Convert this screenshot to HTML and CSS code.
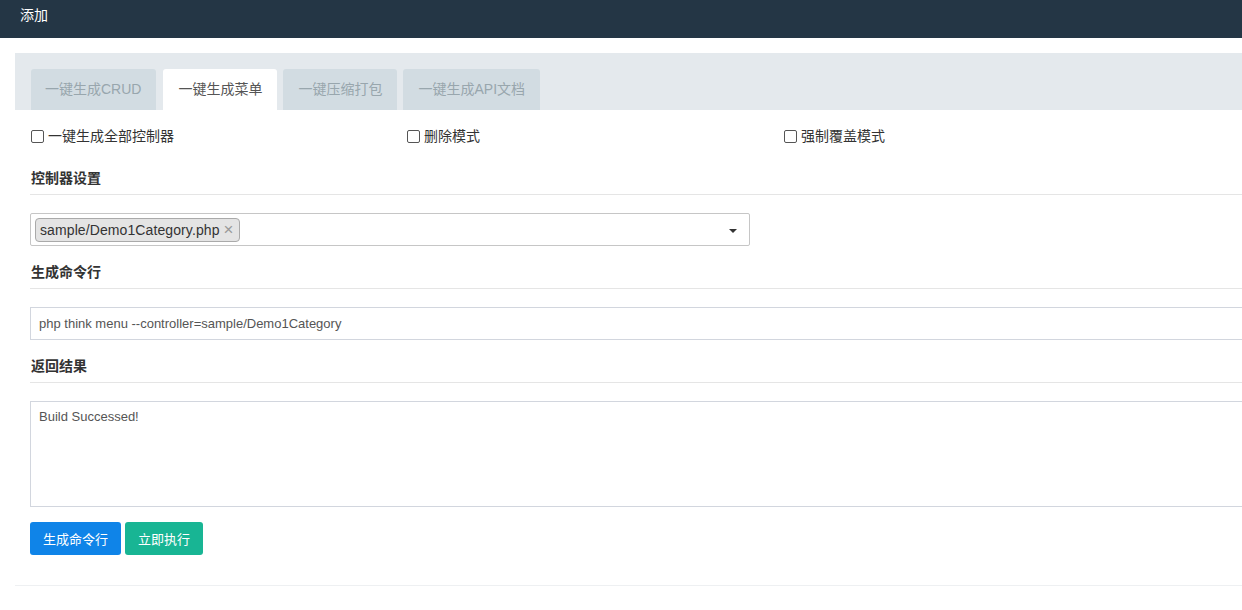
FILE: index.html
```html
<!DOCTYPE html>
<html>
<head>
<meta charset="utf-8">
<link rel="stylesheet" href="styles.css">
</head>
<body>
<div class="topbar">添加</div>
<div class="main">
  <div class="panel">
    <div class="panel-heading">
      <ul class="tabs">
        <li class="tab">一键生成CRUD</li>
        <li class="tab active">一键生成菜单</li>
        <li class="tab">一键压缩打包</li>
        <li class="tab">一键生成API文档</li>
      </ul>
    </div>
    <div class="panel-body">
      <div class="check-row">
        <label class="check"><span class="box"></span>一键生成全部控制器</label>
        <label class="check"><span class="box"></span>删除模式</label>
        <label class="check"><span class="box"></span>强制覆盖模式</label>
      </div>
      <div class="legend first">控制器设置</div>
      <div class="select">
        <span class="tag">sample/Demo1Category.php<span class="x">×</span></span>
        <span class="caret"></span>
      </div>
      <div class="legend">生成命令行</div>
      <div class="input">php think menu --controller=sample/Demo1Category</div>
      <div class="legend">返回结果</div>
      <div class="textarea">Build Successed!</div>
      <div class="buttons">
        <button class="btn btn-blue">生成命令行</button>
        <button class="btn btn-green">立即执行</button>
      </div>
    </div>
  </div>
</div>
</body>
</html>
```
FILE: styles.css
```css
html, body {
  margin: 0;
  padding: 0;
  overflow: hidden;
  background: #fff;
  font-family: "Liberation Sans", "Noto Sans CJK SC", sans-serif;
  font-size: 13px;
  color: #333;
}
.topbar {
  height: 38px;
  box-sizing: border-box;
  background: #243645;
  color: #fff;
  font-size: 14px;
  line-height: 16px;
  padding: 7px 0 0 20px;
}
.main {
  padding: 15px 0 0 15px;
}
.panel {
  width: 1300px;
  border-bottom: 1px solid #eef0f2;
}
.panel-heading {
  background: #e4e9ed;
  padding: 16px 16px 0 16px;
}
.tabs {
  list-style: none;
  margin: 0;
  padding: 0;
  display: flex;
  gap: 6px;
}
.tab {
  height: 41px;
  box-sizing: border-box;
  padding: 0 15px;
  line-height: 41px;
  font-size: 14px;
  color: #98a6ad;
  background: #d2dce2;
  border-radius: 3px 3px 0 0;
}
.tab:first-child { padding: 0 15px 0 14px; margin-right: 1px; }
.tab.active {
  background: #fff;
  color: #555;
}
.panel-body {
  padding: 16px 15px 30px 15px;
}
.check-row {
  display: grid;
  grid-template-columns: 376px 377px 1fr;
  height: 20px;
  line-height: 20px;
  font-size: 14px;
  color: #333;
}
.check {
  display: flex;
  align-items: center;
  padding-left: 1px;
}
.box {
  width: 11px;
  height: 11px;
  border: 1px solid #555;
  border-radius: 2px;
  margin-right: 4px;
  background: #fff;
}
.legend {
  font-size: 14px;
  font-weight: bold;
  color: #333;
  line-height: 20px;
  padding: 0 0 6px 1px;
  border-bottom: 1px solid #e5e5e5;
  margin: 16px 0 18px 0;
}
.legend.first { margin-top: 22px; }
.select {
  width: 720px;
  height: 33px;
  box-sizing: border-box;
  border: 1px solid #c6c6c6;
  border-radius: 2px;
  display: flex;
  align-items: center;
  padding: 0 4px;
  position: relative;
}
.tag {
  height: 24px;
  box-sizing: border-box;
  background: #e4e4e4;
  border: 1px solid #aaa;
  border-radius: 4px;
  font-size: 14px;
  line-height: 22px;
  padding: 0 5px 0 4px;
  color: #333;
  letter-spacing: 0.1px;
}
.tag .x {
  color: #999;
  font-size: 17px;
  margin-left: 4px;
}
.caret {
  position: absolute;
  right: 12px;
  top: 15px;
  width: 0;
  height: 0;
  border-left: 4px solid transparent;
  border-right: 4px solid transparent;
  border-top: 4px solid #333;
}
.input {
  height: 33px;
  box-sizing: border-box;
  border: 1px solid #d2d6de;
  padding: 0 8px;
  line-height: 31px;
  color: #555;
}
.textarea {
  height: 106px;
  box-sizing: border-box;
  border: 1px solid #d2d6de;
  padding: 6px 8px;
  line-height: 18px;
  color: #555;
}
.buttons {
  display: flex;
  gap: 4px;
  margin-top: 15px;
}
.btn {
  height: 33px;
  border: none;
  border-radius: 3px;
  color: #fff;
  font-family: "Liberation Sans", "Noto Sans CJK SC", sans-serif;
  font-size: 13px;
  padding: 0 13px;
}
.btn-blue { background: #0f84e8; }
.btn-green { background: #18b594; }
```
